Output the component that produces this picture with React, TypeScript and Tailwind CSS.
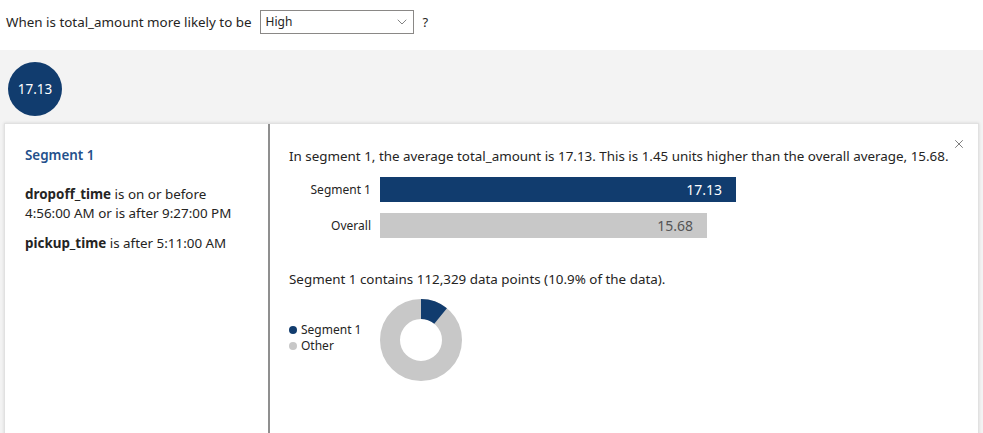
import React from 'react';
import { X, ChevronDown } from 'lucide-react';

const NAVY = '#113c6e';

const DonutChart: React.FC<{ share: number }> = ({ share }) => {
  // segment slice starts at 12 o'clock and runs clockwise
  const a = share * 2 * Math.PI;
  const ox = 41 + 41 * Math.sin(a);
  const oy = 41 - 41 * Math.cos(a);
  const ix = 41 + 21 * Math.sin(a);
  const iy = 41 - 21 * Math.cos(a);
  const large = share > 0.5 ? 1 : 0;
  return (
    <svg width="82" height="82" viewBox="0 0 82 82">
      <circle cx="41" cy="41" r="31" fill="none" stroke="#c8c8c8" strokeWidth="20" />
      <path
        d={`M41 0 A41 41 0 ${large} 1 ${ox} ${oy} L${ix} ${iy} A21 21 0 ${large} 0 41 20 Z`}
        fill={NAVY}
      />
    </svg>
  );
};

const bars = [
  { label: 'Segment 1', value: 17.13, width: 356, bg: 'bg-[#113c6e]', text: 'text-white' },
  { label: 'Overall', value: 15.68, width: 327, bg: 'bg-[#c8c8c8]', text: 'text-[#555]' },
];

export default function App() {
  return (
    <div className="w-[983px] h-[433px] overflow-hidden flex flex-col bg-white text-[#252423] font-['Segoe_UI','Noto_Sans',sans-serif]">
      {/* question row */}
      <div className="h-[50px] shrink-0 flex items-start pt-[10px] pl-[6px]">
        <span className="text-[13.4px] leading-[24px]">When is total_amount more likely to be</span>
        <div className="ml-[8px] w-[154px] h-[24px] border border-[#8a8886] flex items-center justify-between pl-[5px] pr-[3px]">
          <span className="text-[12px]">High</span>
          <ChevronDown size={16} strokeWidth={1} className="text-[#444]" />
        </div>
        <span className="ml-[9px] text-[13px] leading-[24px]">?</span>
      </div>

      <div className="flex-1 bg-[#f3f3f3] pt-[12px] px-[4px] flex flex-col">
        <div className="ml-[4px] w-[54px] h-[54px] shrink-0 rounded-full bg-[#113c6e] flex items-center justify-center text-white text-[13.5px]">
          17.13
        </div>

        <div className="mt-[7px] h-[330px] shrink-0 flex bg-white border border-[#e1e1e1] shadow-[0_0_3px_rgba(0,0,0,0.12)] relative">
          {/* rule list */}
          <div className="w-[265px] shrink-0 border-r-2 border-[#8f8f8f] pl-[20px] pr-[24px] pt-[22px] text-[13.4px] leading-[19px]">
            <div className="text-[#24508b] font-semibold">Segment 1</div>
            <p className="mt-[20px]">
              <span className="font-bold">dropoff_time</span> is on or before 4:56:00 AM or is after 9:27:00 PM
            </p>
            <p className="mt-[11px]">
              <span className="font-bold">pickup_time</span> is after 5:11:00 AM
            </p>
          </div>

          {/* details */}
          <div className="flex-1 pl-[19px] pt-[23px]">
            <p className="text-[13.4px] leading-[19px]">
              In segment 1, the average total_amount is 17.13. This is 1.45 units higher than the overall average, 15.68.
            </p>

            <div className="mt-[11px] flex flex-col gap-[11px]">
              {bars.map((b) => (
                <div key={b.label} className="flex items-center gap-[9px]">
                  <span className="w-[82px] text-right text-[12px]">{b.label}</span>
                  <div
                    className={`h-[25px] flex items-center justify-end pr-[14px] ${b.bg} ${b.text} text-[14px]`}
                    style={{ width: b.width }}
                  >
                    {b.value.toFixed(2)}
                  </div>
                </div>
              ))}
            </div>

            <p className="mt-[32px] text-[13.4px] leading-[19px]">
              Segment 1 contains 112,329 data points (10.9% of the data).
            </p>

            <div className="mt-[10px] flex items-start gap-[9px]">
              <div className="w-[82px] pt-[23px] text-[12px] leading-[16px]">
                <div className="flex items-center gap-[4px]">
                  <span className="w-[8px] h-[8px] rounded-full bg-[#113c6e]" />
                  Segment 1
                </div>
                <div className="flex items-center gap-[4px]">
                  <span className="w-[8px] h-[8px] rounded-full bg-[#c8c8c8]" />
                  Other
                </div>
              </div>
              <DonutChart share={0.109} />
            </div>
          </div>

          <X size={14} strokeWidth={1.3} className="absolute right-[12px] top-[13px] text-[#555]" />
        </div>
      </div>
    </div>
  );
}
